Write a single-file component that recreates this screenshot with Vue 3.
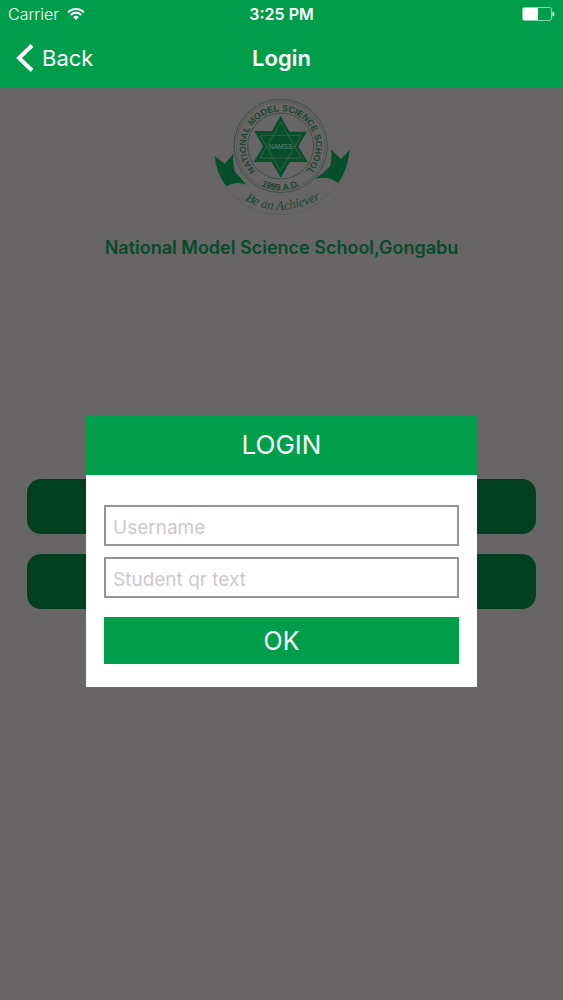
<script setup>
import { ref } from 'vue'

const username = ref('')
const qrText = ref('')

// the two entries of the page that stay behind the dialog
const actions = ['Login', 'Scan student qr']
</script>

<template>
  <div class="screen">
    <header class="topbar">
      <div class="status">
        <div class="carrier">
          <span>Carrier</span>
          <svg class="wifi" viewBox="0 0 18 14" aria-hidden="true">
            <path d="M1 5.2a11.4 11.4 0 0 1 16 0" />
            <path d="M3.8 8a7.4 7.4 0 0 1 10.4 0" />
            <path class="dot" d="M6.2 10.2a4 4 0 0 1 5.6 0L9 13z" />
          </svg>
        </div>
        <span class="time">3:25 PM</span>
        <svg class="battery" viewBox="0 0 34 14" aria-hidden="true">
          <rect class="case" x="1.5" y="0.5" width="29" height="13" rx="2" />
          <rect class="level" x="2" y="1" width="15" height="12" rx="1" />
          <path class="level" d="M31.500 4.500q2 .5 2 2.500t-2 2.500z" />
        </svg>
      </div>
      <nav class="nav">
        <a class="back" href="#">
          <svg viewBox="0 0 18 28" aria-hidden="true">
            <path d="M16 1.500L3 14l13 12.500" />
          </svg>
          <span>Back</span>
        </a>
        <h1>Login</h1>
      </nav>
    </header>

    <main class="content">
      <section class="page">
        <svg class="logo" viewBox="28 21 432 360" role="img" aria-label="School logo">
          <defs>
            <path id="ring-top" d="M165 242A105 105 0 1 1 315 242" />
            <path id="ring-bottom" d="M145 260A132 132 0 0 0 335 260" />
            <path id="motto" d="M128 326Q228 394 366 324" />
          </defs>
          <path class="wing" d="M42 198L72 221L98 192Q96 238 106 249L118 262L138 284Q104 272 78 290Q46 250 42 198z" />
          <path class="wing" d="M447 179L421 208L391 177Q394 214 388 229L370 246L344 266Q384 256 412 279Q442 240 447 179z" />
          <path class="fold" d="M78 290Q88 314 122 330M412 279Q400 304 372 320" />
          <path class="fold" d="M104 322Q150 372 240 374Q330 372 384 308" />
          <circle class="ring" cx="240" cy="168" r="140" />
          <circle class="ring thin" cx="240" cy="168" r="133" />
          <circle class="ring" cx="240" cy="168" r="99" />
          <path class="star" d="M240 77L266 125H319L293 169L321 216H267L240 263L213 216H159L187 169L161 123H214z" />
          <path class="star-line" d="M240 97L302 204H178zM240 243L178 136H302z" />
          <text class="star-name" x="240" y="176">NAMSS</text>
          <text class="ring-text">
            <textPath href="#ring-top" startOffset="50%">NATIONAL MODEL SCIENCE SCHOOL</textPath>
          </text>
          <text class="ring-text">
            <textPath href="#ring-bottom" startOffset="50%">1999 A.D.</textPath>
          </text>
          <text class="motto">
            <textPath href="#motto" startOffset="50%">Be an Achiever</textPath>
          </text>
        </svg>
        <h2>National Model Science School,Gongabu</h2>
        <div class="actions">
          <button v-for="action in actions" :key="action" type="button" :aria-label="action"></button>
        </div>
      </section>

      <div class="overlay">
        <form class="dialog" role="dialog" aria-labelledby="dialog-title" @submit.prevent>
          <h2 id="dialog-title">LOGIN</h2>
          <div class="fields">
            <input v-model="username" type="text" placeholder="Username" aria-label="Username">
            <input v-model="qrText" type="text" placeholder="Student qr text" aria-label="Student qr text">
            <button type="submit">OK</button>
          </div>
        </form>
      </div>
    </main>
  </div>
</template>

<style>
body {
  margin: 0;
}
</style>

<style scoped>
.screen {
  display: flex;
  flex-direction: column;
  min-height: 100vh;
  font-family: Inter, 'Liberation Sans', sans-serif;
}

h1,
h2 {
  margin: 0;
}

.topbar {
  color: #fff;
  background-color: #009e4b;
}

.status {
  display: grid;
  grid-template-columns: 1fr auto 1fr;
  align-items: center;
  height: 28px;
  padding: 0 8px;
  font-size: 16px;
}

.carrier {
  display: flex;
  align-items: center;
  gap: 8px;
  font-weight: 300;
}

.wifi {
  width: 18px;
  height: 14px;
  fill: none;
  stroke: #fff;
  stroke-width: 2;
}

.wifi .dot {
  fill: #fff;
  stroke: none;
}

.time {
  font-weight: 600;
}

.battery {
  justify-self: end;
  width: 34px;
  height: 14px;
}

.battery .case {
  fill: none;
  stroke: #8fd6ae;
}

.battery .level {
  fill: #fff;
}

.nav {
  display: grid;
  grid-template-columns: 1fr auto 1fr;
  align-items: center;
  height: 59px;
  padding: 0 16px;
}

.back {
  display: flex;
  align-items: center;
  gap: 8px;
  color: #fff;
  font-size: 22px;
  text-decoration: none;
}

.back svg {
  width: 18px;
  height: 28px;
  fill: none;
  stroke: #fff;
  stroke-width: 4;
}

.nav h1 {
  font-size: 22px;
  font-weight: 600;
}

.content {
  display: grid;
  flex: 1;
  background-color: #676566;
}

/* page and overlay share the same grid cell */
.page,
.overlay {
  grid-area: 1 / 1;
}

.page {
  display: flex;
  flex-direction: column;
  align-items: center;
  padding: 10px 27px;
}

.logo {
  width: 144px;
  height: 120px;
  font-family: 'Liberation Sans', sans-serif;
}

.wing,
.star {
  fill: #074f28;
}

.fold,
.ring,
.star-line {
  fill: none;
  stroke: #24452f;
  stroke-width: 2;
}

.fold {
  stroke: #595c59;
}

.ring.thin {
  stroke-width: 1;
}

.star-line {
  stroke: #4c6b56;
}

.logo text {
  fill: #1c452e;
  text-anchor: middle;
}

.logo .ring-text {
  font-size: 27px;
  font-weight: 700;
}

.logo .star-name {
  fill: #6c8572;
  font-size: 20px;
}

.logo .motto {
  font-family: 'Liberation Serif', serif;
  font-size: 39px;
  font-style: italic;
}

.page h2 {
  margin-top: 20px;
  color: #074a2c;
  font-size: 18px;
  line-height: 22px;
  font-weight: 600;
}

.actions {
  display: flex;
  flex-direction: column;
  gap: 20px;
  align-self: stretch;
  margin-top: 220px;
}

.actions button {
  height: 55px;
  border: none;
  border-radius: 14px;
  background-color: #00401f;
}

.overlay {
  display: flex;
  flex-direction: column;
  justify-content: center;
  padding: 15px 86px 0;
}

.dialog {
  background-color: #fff;
}

.dialog h2 {
  color: #fff;
  background-color: #009e4b;
  font-size: 26px;
  line-height: 60px;
  font-weight: 400;
  text-align: center;
}

.fields {
  display: flex;
  flex-direction: column;
  padding: 30px 18px 23px;
}

.fields input {
  box-sizing: border-box;
  height: 41px;
  margin-bottom: 11px;
  padding: 4px 7px 0;
  border: 2px solid #969296;
  border-radius: 0;
  background-color: #fff;
  font-family: inherit;
  font-size: 19px;
}

.fields input::placeholder {
  color: #cdc9ce;
}

.fields button {
  height: 47px;
  margin-top: 8px;
  border: none;
  color: #fff;
  background-color: #009e4b;
  font-family: inherit;
  font-size: 25px;
}
</style>
